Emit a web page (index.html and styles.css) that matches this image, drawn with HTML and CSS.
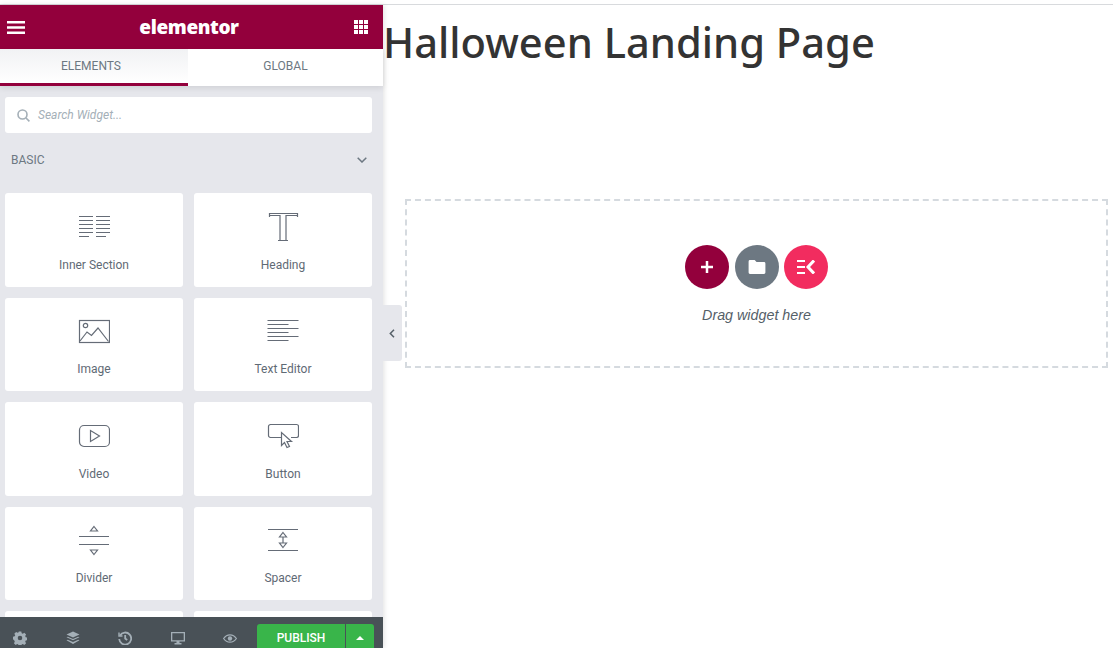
FILE: index.html
```html
<!DOCTYPE html>
<html lang="en">

<head>
    <title>Halloween Landing Page - Elementor</title>
    <link rel="stylesheet" href="styles.css">
</head>

<body>
    <div class="app">
        <aside class="panel">
            <div class="panel-header">
                <svg class="menu-icon" width="18" height="13" viewBox="0 0 18 13"><path d="M0 1.250h18M0 6.500h18M0 11.750h18" stroke="#fff" stroke-width="2.500"/></svg>
                <span class="logo">elementor</span>
                <svg class="apps-icon" width="14" height="14" viewBox="0 0 14 14" fill="#fff">
                    <rect width="4" height="4"/><rect x="5" width="4" height="4"/><rect x="10" width="4" height="4"/>
                    <rect y="5" width="4" height="4"/><rect x="5" y="5" width="4" height="4"/><rect x="10" y="5" width="4" height="4"/>
                    <rect y="10" width="4" height="4"/><rect x="5" y="10" width="4" height="4"/><rect x="10" y="10" width="4" height="4"/>
                </svg>
            </div>

            <div class="tabs">
                <div class="tab active">ELEMENTS</div>
                <div class="tab">GLOBAL</div>
            </div>

            <div class="panel-body">
                <div class="search">
                    <svg width="13" height="13" viewBox="0 0 13 13" fill="none" stroke="#a4afb7" stroke-width="1.600"><circle cx="5.500" cy="5.500" r="4.500"/><path d="M9 9l3.400 3.400"/></svg>
                    <span>Search Widget...</span>
                </div>

                <div class="category">
                    <span>BASIC</span>
                    <svg width="10" height="6" viewBox="0 0 10 6" fill="none" stroke="#6d7882" stroke-width="1.500"><path d="M.7.7L5 5l4.300-4.300"/></svg>
                </div>

                <div class="widgets">
                    <div class="widget">
                        <svg class="widget-icon" viewBox="0 0 32 32"><path d="M1 5.500h14M18 5.500h14M1 9.500h14M18 9.500h14M1 13.500h14M18 13.500h14M1 17.500h14M18 17.500h14M1 21.500h14M18 21.500h14M1 25.500h10M18 25.500h10"/></svg>
                        <span>Inner Section</span>
                    </div>
                    <div class="widget">
                        <svg class="widget-icon" viewBox="0 0 32 32"><path d="M2.500 6V2.500h28V6M2.500 4.500h10.500V29.500M30.500 4.500H19V29.500M11 29.500h10"/></svg>
                        <span>Heading</span>
                    </div>
                    <div class="widget">
                        <svg class="widget-icon" viewBox="0 0 32 32"><rect x="1.500" y="4.500" width="30" height="22"/><circle cx="7.500" cy="9.500" r="2.200"/><path d="M2 25l7-9 4.500 3.500 6.500-7.500 10.500 13.500"/></svg>
                        <span>Image</span>
                    </div>
                    <div class="widget">
                        <svg class="widget-icon" viewBox="0 0 32 32"><path d="M.5 4.500h31M.5 8.500h21M.5 12.500h31M.5 16.500h21M.5 20.500h31M.5 24.500h21"/></svg>
                        <span>Text Editor</span>
                    </div>
                    <div class="widget">
                        <svg class="widget-icon" viewBox="0 0 32 32"><rect x="1.500" y="5.500" width="30" height="21" rx="4.500"/><path d="M12.500 10.500v11l9-5.500z"/></svg>
                        <span>Video</span>
                    </div>
                    <div class="widget">
                        <svg class="widget-icon" viewBox="0 0 32 32"><path d="M14 17.500H3.500a2 2 0 0 1-2-2v-9a2 2 0 0 1 2-2h26a2 2 0 0 1 2 2v9a2 2 0 0 1-2 2H24"/><path d="M14.500 12.500v13l3-3 2.500 5 2.500-1-2.500-5h4.500z" fill="#fff"/></svg>
                        <span>Button</span>
                    </div>
                    <div class="widget">
                        <svg class="widget-icon" viewBox="0 0 32 32"><path d="M16 1.500l3.500 4.500h-7zM16 29.500l3.500-4.500h-7zM1 11.500h30M1 19.500h30"/></svg>
                        <span>Divider</span>
                    </div>
                    <div class="widget">
                        <svg class="widget-icon" viewBox="0 0 32 32"><path d="M1 4.500h30M1 25.500h30M16 7.500l3.500 4.500h-7zM16 22.500l3.500-4.500h-7zM16 12v6"/></svg>
                        <span>Spacer</span>
                    </div>
                    <div class="widget"></div>
                    <div class="widget"></div>
                </div>
            </div>

            <div class="panel-footer">
                <div class="footer-tools">
                    <svg viewBox="0 0 14 14" fill="#a4afb7"><path fill-rule="evenodd" d="M5.700.5h2.600l.4 1.700 1.100.5 1.500-.9 1.800 1.800-.9 1.500.5 1.100 1.700.4v2.600l-1.700.4-.5 1.100.9 1.500-1.800 1.800-1.500-.9-1.100.5-.4 1.700H5.700l-.4-1.700-1.100-.5-1.500.9-1.800-1.800.9-1.500-.5-1.100L0 8.300V5.700l1.700-.4.5-1.100-.9-1.500L3.100 .9l1.500.9 1.100-.5zM7 4.700a2.300 2.300 0 1 0 0 4.600 2.300 2.300 0 0 0 0-4.600z"/></svg>
                    <svg viewBox="0 0 14 14" fill="#a4afb7"><path d="M7 .5l6.500 3L7 6.500.5 3.500z"/><path d="M1.800 5.700L7 8.100l5.200-2.400 1.300.6L7 9.300.5 6.300z"/><path d="M1.800 8.700L7 11.100l5.200-2.400 1.300.6L7 13 .5 9.300z"/></svg>
                    <svg viewBox="0 0 14 14" fill="none" stroke="#a4afb7" stroke-width="1.800"><path d="M2 4.500A6 6 0 1 1 1.200 8"/><path d="M1 1.500v3.500h3.500" stroke-width="1.400"/><path d="M7.200 4v3.500l2 1.500"/></svg>
                    <svg viewBox="0 0 14 14" fill="#a4afb7"><path fill-rule="evenodd" d="M0 1h14v9.500H8.500v1.500H10.500V13.500h-7V12h2V10.500H0zM1.300 2.300v6.900h11.400V2.300z"/></svg>
                    <svg viewBox="0 0 14 14" fill="none" stroke="#a4afb7" stroke-width="1.200"><path d="M.6 7.500C2.300 5 4.500 3.800 7 3.800s4.700 1.200 6.400 3.700C11.700 10 9.500 11.200 7 11.200S2.300 10 .6 7.500z"/><circle cx="7" cy="7.500" r="2.200" fill="#a4afb7" stroke="none"/></svg>
                </div>
                <div class="publish">
                    <div class="publish-main">PUBLISH</div>
                    <div class="publish-more"><span class="caret"></span></div>
                </div>
            </div>

            <div class="collapse">
                <svg width="6" height="9" viewBox="0 0 6 9" fill="none" stroke="#556068" stroke-width="1.500"><path d="M5 .7L1.300 4.500 5 8.300"/></svg>
            </div>
        </aside>

        <main class="canvas">
            <h1>Halloween Landing Page</h1>
            <div class="dropzone">
                <div class="drop-buttons">
                    <div class="round add">
                        <svg width="14" height="14" viewBox="0 0 14 14"><path d="M7 1v12M1 7h12" stroke="#fff" stroke-width="2.500"/></svg>
                    </div>
                    <div class="round folder">
                        <svg width="18" height="14" viewBox="0 0 18 15"><path d="M1.500 0h5l2 2.200h8a1.500 1.500 0 0 1 1.500 1.500v9.800a1.500 1.500 0 0 1-1.500 1.500h-15A1.500 1.500 0 0 1 0 13.500v-12A1.500 1.500 0 0 1 1.500 0z" fill="#fff"/></svg>
                    </div>
                    <div class="round kit">
                        <svg width="18" height="14" viewBox="0 0 18 14"><path d="M0 1h8M0 7h8M0 13h8" stroke="#fff" stroke-width="2.200"/><path d="M17 .5L11 7l6 6.500" stroke="#fff" stroke-width="3" fill="none"/></svg>
                    </div>
                </div>
                <p class="drop-title">Drag widget here</p>
            </div>
        </main>
    </div>
</body>

</html>
```

FILE: styles.css
```css
:root {
    --brand: #93003c;
    --panel-bg: #e6e7ec;
    --text: #6d7882;
    --footer-bg: #495157;
}

html, body {
    height: 100%;
}

body {
    margin: 0;
    overflow: hidden;
    background-color: #fff;
    font-family: Roboto, Arial, sans-serif;
    color: var(--text);
}

.app {
    display: flex;
    height: 648px;
    box-sizing: border-box;
    padding-top: 5px;
    background: linear-gradient(#fff 4px, #d8dadd 4px, #d8dadd 5px, transparent 5px);
}

.panel {
    position: relative;
    flex: 0 0 383px;
    display: flex;
    flex-direction: column;
    background-color: var(--panel-bg);
    box-shadow: 1px 0 5px rgba(0,0,0,0.12);
}

.panel-header {
    display: flex;
    justify-content: space-between;
    align-items: center;
    height: 44px;
    padding: 0 15px 0 7px;
    background-color: var(--brand);
}

.logo {
    font-family: "Open Sans", sans-serif;
    font-weight: 800;
    font-size: 19px;
    letter-spacing: -0.4px;
    color: #fff;
    margin-right: 1px;
}

.tabs {
    display: flex;
    height: 37px;
    background-color: #fff;
    box-shadow: 0 2px 6px rgba(0,0,0,0.1);
    position: relative;
}

.tab {
    flex: 1;
    display: flex;
    justify-content: center;
    align-items: center;
    font-size: 12px;
    padding-bottom: 3px;
    box-sizing: border-box;
}

.tab.active {
    flex: 0 0 188px;
    border-bottom: 3px solid var(--brand);
    padding: 0 6px 0 0;
    background: linear-gradient(#f1f2f4, #fff);
}

.panel-body {
    flex: 1;
    min-height: 0;
    overflow: hidden;
    padding: 11px 11px 0 5px;
}

.search {
    display: flex;
    align-items: center;
    gap: 8px;
    height: 36px;
    padding-left: 12px;
    border-radius: 3px;
    background-color: #fff;
    font-size: 12px;
    font-style: italic;
    color: #a4afb7;
}

.category {
    display: flex;
    justify-content: space-between;
    align-items: center;
    height: 20px;
    margin-top: 17px;
    padding: 0 5px 0 6px;
    font-size: 12px;
}

.widgets {
    display: grid;
    grid-template-columns: 178px 178px;
    grid-auto-rows: 93.5px;
    gap: 11px;
    margin-top: 23px;
}

.widget {
    display: flex;
    flex-direction: column;
    align-items: center;
    padding-top: 18px;
    box-sizing: border-box;
    border-radius: 3px;
    background-color: #fff;
    font-size: 12px;
    color: #5f6a75;
}

.widget span {
    margin-top: 14.7px;
}

.widget-icon {
    width: 32px;
    height: 32px;
    fill: none;
    stroke: #656c77;
    stroke-width: 1.2;
}

.panel-footer {
    display: flex;
    align-items: flex-start;
    height: 31px;
    overflow: hidden;
    background-color: var(--footer-bg);
}

.footer-tools {
    display: flex;
    gap: 38.5px;
    padding: 14px 0 0 13px;
}

.footer-tools svg {
    width: 14px;
    height: 14px;
}

.publish {
    display: flex;
    gap: 1px;
    height: 28px;
    flex-shrink: 0;
    margin: 7px 9px 0 auto;
    border-radius: 3px;
    overflow: hidden;
    color: #fff;
    font-size: 12px;
    font-weight: 500;
}

.publish-main, .publish-more {
    display: flex;
    justify-content: center;
    align-items: center;
    background-color: #39b54a;
}

.publish-main {
    width: 88px;
}

.publish-more {
    width: 28px;
}

.caret {
    border: 4px solid transparent;
    border-top-width: 0;
    border-bottom-color: #fff;
}

.collapse {
    position: absolute;
    left: 383px;
    top: 300px;
    display: flex;
    justify-content: center;
    align-items: center;
    width: 19px;
    height: 56px;
    padding-right: 1px;
    box-sizing: border-box;
    background-color: var(--panel-bg);
    border-radius: 0 3px 3px 0;
}

.canvas {
    flex: 1;
    min-width: 0;
    padding-right: 5px;
}

h1 {
    margin: 0;
    font-family: "Noto Sans", sans-serif;
    font-weight: 500;
    font-size: 41.7px;
    line-height: 74px;
    color: #333;
}

.dropzone {
    margin: 120px 0 0 22px;
    height: 169px;
    box-sizing: border-box;
    padding-top: 44px;
    border: 2px dashed #d5dadf;
    text-align: center;
}

.drop-buttons {
    display: flex;
    justify-content: center;
    gap: 5.5px;
}

.round {
    display: flex;
    justify-content: center;
    align-items: center;
    width: 44px;
    height: 44px;
    border-radius: 50%;
}

.add {
    background-color: var(--brand);
}

.folder {
    background-color: var(--text);
}

.kit {
    background-color: #f22c5f;
}

.drop-title {
    margin: 18px 0 0;
    font-family: "Liberation Sans", Arial, sans-serif;
    font-size: 14.3px;
    font-style: italic;
    color: #556068;
}
```
